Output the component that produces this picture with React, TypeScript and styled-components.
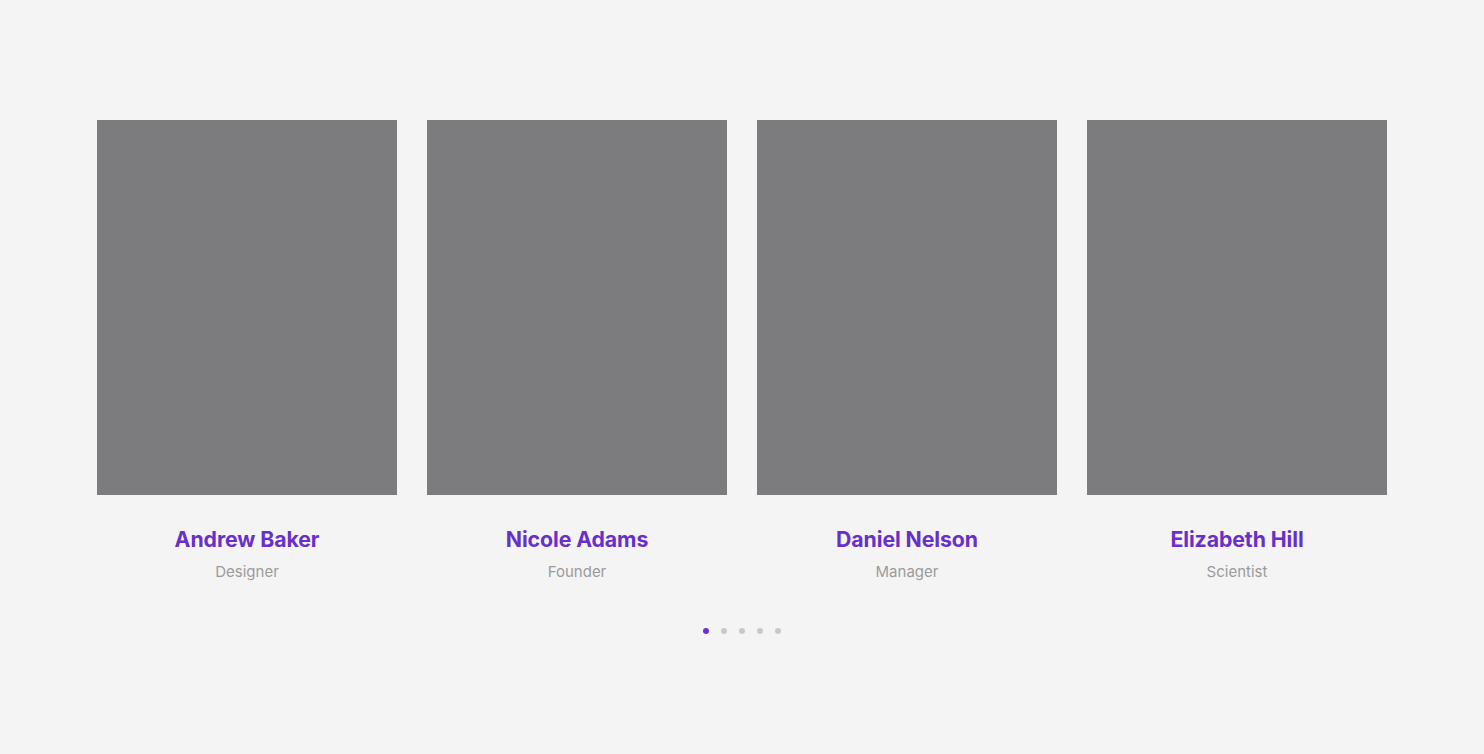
import React from "react";
import styled, { createGlobalStyle } from "styled-components";

const Global = createGlobalStyle`
  html, body { margin: 0; padding: 0; background: #f4f4f4; }
  body { font-family: Inter, "Noto Sans", sans-serif; }
`;

const Page = styled.div`
  width: 1484px;
  height: 754px;
  background: #f4f4f4;
  display: flex;
  flex-direction: column;
  align-items: center;
  padding-top: 120px;
  box-sizing: border-box;
`;

const Grid = styled.div`
  display: grid;
  grid-template-columns: repeat(4, 300px);
  column-gap: 30px;
`;

const Card = styled.div`
  display: flex;
  flex-direction: column;
  align-items: center;
`;

const Photo = styled.div`
  width: 300px;
  height: 375px;
  background: #7c7c7e;
`;

const Name = styled.div`
  margin-top: 29px;
  font-size: 21.3px;
  line-height: 30px;
  font-weight: 700;
  color: #6930c8;
  letter-spacing: -0.1px;
`;

const Role = styled.div`
  margin-top: 7px;
  font-size: 15px;
  line-height: 22px;
  color: #9b9b9b;
`;

const Dots = styled.div`
  display: flex;
  gap: 12px;
  margin-top: 45px;
`;

const Dot = styled.span<{ $active?: boolean }>`
  width: 6px;
  height: 6px;
  border-radius: 50%;
  background: ${(p) => (p.$active ? "#6d2fd6" : "#c8c8c8")};
`;

const team = [
  { name: "Andrew Baker", role: "Designer" },
  { name: "Nicole Adams", role: "Founder" },
  { name: "Daniel Nelson", role: "Manager" },
  { name: "Elizabeth Hill", role: "Scientist" },
];

export default function App() {
  return (
    <>
      <Global />
      <Page>
        <Grid>
          {team.map((m) => (
            <Card key={m.name}>
              <Photo />
              <Name>{m.name}</Name>
              <Role>{m.role}</Role>
            </Card>
          ))}
        </Grid>
        <Dots>
          {[0, 1, 2, 3, 4].map((i) => (
            <Dot key={i} $active={i === 0} />
          ))}
        </Dots>
      </Page>
    </>
  );
}
